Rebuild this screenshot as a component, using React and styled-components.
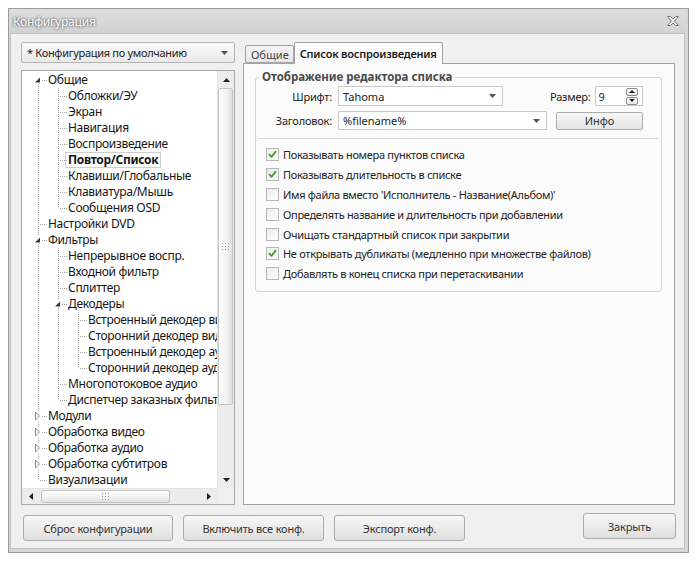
import React from 'react';
import styled, { createGlobalStyle } from 'styled-components';

const Global = createGlobalStyle`
  html, body { margin: 0; padding: 0; background: #ffffff; }
  body { font-family: "Noto Sans", "DejaVu Sans", sans-serif; color: #1a1a1a; }
  * { box-sizing: border-box; }
`;

const TREE = [
  { label: 'Общие', open: true, children: [
    { label: 'Обложки/ЭУ' }, { label: 'Экран' }, { label: 'Навигация' }, { label: 'Воспроизведение' },
    { label: 'Повтор/Список', selected: true }, { label: 'Клавиши/Глобальные' },
    { label: 'Клавиатура/Мышь' }, { label: 'Сообщения OSD' },
  ] },
  { label: 'Настройки DVD' },
  { label: 'Фильтры', open: true, children: [
    { label: 'Непрерывное воспр.' }, { label: 'Входной фильтр' }, { label: 'Сплиттер' },
    { label: 'Декодеры', open: true, children: [
      { label: 'Встроенный декодер видео' }, { label: 'Сторонний декодер видео' },
      { label: 'Встроенный декодер аудио' }, { label: 'Сторонний декодер аудио' },
    ] },
    { label: 'Многопотоковое аудио' }, { label: 'Диспетчер заказных фильтров' },
  ] },
  { label: 'Модули', children: [{ label: '-' }] },
  { label: 'Обработка видео', children: [{ label: '-' }] },
  { label: 'Обработка аудио', children: [{ label: '-' }] },
  { label: 'Обработка субтитров', children: [{ label: '-' }] },
  { label: 'Визуализации' },
];

function flatten(nodes, level = 0, guides = [], out = []) {
  nodes.forEach((node, i) => {
    const hasNext = i < nodes.length - 1;
    out.push({ node, level, guides, hasNext, firstRoot: level === 0 && i === 0 });
    if (node.open && node.children) flatten(node.children, level + 1, guides.concat(hasNext), out);
  });
  return out;
}

const CHECKS = [
  { text: 'Показывать номера пунктов списка', on: true },
  { text: 'Показывать длительность в списке', on: true },
  { text: "Имя файла вместо 'Исполнитель - Название(Альбом)'", on: false },
  { text: 'Определять название и длительность при добавлении', on: false },
  { text: 'Очищать стандартный список при закрытии', on: false },
  { text: 'Не открывать дубликаты (медленно при множестве файлов)', on: true },
  { text: 'Добавлять в конец списка при перетаскивании', on: false },
];

/* ---------- window chrome ---------- */
const Page = styled.div`
  width: 698px;
  height: 561px;
  padding: 8px 0 0 8px;
  background: #ffffff;
`;

const Window = styled.div`
  width: 681px;
  height: 545px;
  border: 1px solid #9c9c9c;
  background: #d6d6d6;
  display: flex;
  flex-direction: column;
  padding: 0 3px 3px 1px;
`;

const TitleBar = styled.div`
  height: 24px;
  flex: 0 0 24px;
  display: flex;
  align-items: center;
  justify-content: space-between;
  padding: 0 5px 0 3px;
  background: linear-gradient(to bottom, #dedede, #d2d2d2);
`;

const TitleText = styled.span`
  font-size: 12px;
  color: #ffffff;
  letter-spacing: -0.2px;
  text-shadow: 0 0 3px #5e5e5e, 0 0 2px #6e6e6e;
`;

const CloseGlyph = styled.svg`
  display: block;
  width: 14px;
  height: 12px;
`;

const CloseIcon = () => (
  <CloseGlyph viewBox="0 0 14 12">
    <path
      d="M1.5 1.5 H4.5 L7 4 L9.5 1.5 H12.5 L8.5 6 L12.5 10.5 H9.5 L7 8 L4.5 10.5 H1.5 L5.5 6 Z"
      fill="#f4f4f4"
      stroke="#7a7a7a"
      strokeWidth="1"
      strokeLinejoin="round"
    />
  </CloseGlyph>
);

const Client = styled.div`
  flex: 1;
  display: flex;
  flex-direction: column;
  background: #f0f0f0;
  border: 1px solid #c2c2c2;
  padding: 8px 8px 7px 10px;
`;

const MainRow = styled.div`
  display: flex;
  gap: 8px;
  height: 463px;
`;

/* ---------- left column ---------- */
const LeftColumn = styled.div`
  width: 214px;
  display: flex;
  flex-direction: column;
  gap: 7px;
`;

const ConfigSelect = styled.div`
  height: 21px;
  flex: 0 0 21px;
  border: 1px solid #b4b4b4;
  border-radius: 2px;
  background: linear-gradient(to bottom, #fafafa, #e9e9e9);
  display: flex;
  align-items: center;
  justify-content: space-between;
  padding: 0 6px 0 5px;
  font-size: 11px;
  letter-spacing: -0.3px;
  color: #222;
`;

const ArrowSvg = styled.svg`
  display: block;
  flex: 0 0 auto;
`;

const Tri = ({ dir = 'down', color = '#555', w = 7, h = 4 }) => {
  const pts = {
    down: `0,0 ${w},0 ${w / 2},${h}`,
    up: `0,${h} ${w},${h} ${w / 2},0`,
    left: `${w},0 ${w},${h} 0,${h / 2}`,
    right: `0,0 0,${h} ${w},${h / 2}`,
  }[dir];
  return (
    <ArrowSvg width={w} height={h} viewBox={`0 0 ${w} ${h}`}>
      <polygon points={pts} fill={color} />
    </ArrowSvg>
  );
};

const TreeFrame = styled.div`
  flex: 1;
  border: 1px solid #a9a9a9;
  background: #ffffff;
  display: grid;
  grid-template-columns: 195px 17px;
  grid-template-rows: 417px 16px;
`;

const TreeList = styled.div`
  overflow: hidden;
  padding: 1px 0 0 6px;
  background: #ffffff;
`;

const TreeRow = styled.div`
  display: flex;
  align-items: center;
  height: 16px;
  white-space: nowrap;
`;

const Cell = styled.span`
  position: relative;
  flex: 0 0 20px;
  height: 16px;
  &::before {
    content: '';
    display: ${(p) => (p.$up || p.$down ? 'block' : 'none')};
    position: absolute;
    left: 10px;
    width: 1px;
    top: ${(p) => (p.$up ? '0' : '8px')};
    bottom: ${(p) => (p.$down ? '0' : '8px')};
    background: repeating-linear-gradient(to bottom, #a3a3a3 0 1px, transparent 1px 2px);
  }
  &::after {
    content: '';
    display: ${(p) => (p.$elbow ? 'block' : 'none')};
    position: absolute;
    left: 12px;
    top: 8px;
    width: 7px;
    height: 1px;
    background: repeating-linear-gradient(to right, #a3a3a3 0 1px, transparent 1px 2px);
  }
`;

const Expander = styled.svg`
  position: absolute;
  left: 6px;
  top: ${(p) => (p.$open ? '4px' : '3px')};
  z-index: 1;
  display: block;
`;

const ExpanderIcon = ({ open }) =>
  open ? (
    <Expander $open width="8" height="8" viewBox="0 0 8 8">
      <rect x="0" y="0" width="8" height="8" fill="#ffffff" />
      <polygon points="6,1.5 6,6.5 1,6.5" fill="#3a3a3a" />
    </Expander>
  ) : (
    <Expander width="8" height="10" viewBox="0 0 8 10">
      <rect x="0" y="0" width="8" height="10" fill="#ffffff" />
      <polygon points="1.5,1 5.5,5 1.5,9" fill="#ffffff" stroke="#8c8c8c" strokeWidth="1" />
    </Expander>
  );

const NodeLabel = styled.span`
  font-size: 12px;
  letter-spacing: -0.3px;
  line-height: 14px;
  height: 16px;
  padding: 0 2px;
  margin-left: -3px;
  border: 1px solid ${(p) => (p.$selected ? '#cfcfcf' : 'transparent')};
  font-weight: ${(p) => (p.$selected ? 700 : 400)};
  color: #151515;
`;

const VScroll = styled.div`
  display: flex;
  flex-direction: column;
  background: #ececec;
  border-left: 1px solid #e4e4e4;
`;

const HScroll = styled.div`
  display: flex;
  align-items: stretch;
  background: #ececec;
  border-top: 1px solid #e4e4e4;
`;

const Corner = styled.div`
  background: #f0f0f0;
`;

const ScrollButton = styled.div`
  flex: 0 0 17px;
  display: flex;
  align-items: center;
  justify-content: center;
`;

const Track = styled.div`
  flex: 1;
  display: flex;
  flex-direction: ${(p) => (p.$vertical ? 'column' : 'row')};
`;

const Thumb = styled.div`
  ${(p) =>
    p.$vertical
      ? `height: 317px; margin: 0 1px 0 0; background: linear-gradient(to right, #fdfdfd, #f3f3f3 55%, #e0e0e0);`
      : `width: 129px; margin: 1px 0 1px 2px; background: linear-gradient(to bottom, #fdfdfd, #f1f1f1 55%, #e2e2e2);`}
  border: 1px solid #c4c4c4;
  border-radius: 2px;
  display: flex;
  align-items: center;
  justify-content: center;
`;

const Grip = () => (
  <svg width="7" height="7" viewBox="0 0 7 7">
    {[0, 3, 6].map((y) =>
      [0, 3, 6].map((x) => <rect key={`${x}-${y}`} x={x} y={y} width="1" height="1" fill="#9a9a9a" />)
    )}
  </svg>
);

/* ---------- right side ---------- */
const TabArea = styled.div`
  width: 432px;
  display: flex;
  flex-direction: column;
`;

const TabStrip = styled.div`
  display: flex;
  align-items: flex-end;
  height: 21px;
  flex: 0 0 21px;
  padding-left: 2px;
  position: relative;
  z-index: 1;
`;

const Tab = styled.div`
  height: ${(p) => (p.$active ? '22px' : '18px')};
  margin-bottom: ${(p) => (p.$active ? '-1px' : '0')};
  padding: 0 ${(p) => (p.$active ? '5px' : '4px')} 0 5px;
  display: flex;
  align-items: center;
  border: 1px solid #a3a3a3;
  border-bottom: ${(p) => (p.$active ? 'none' : '1px solid #a3a3a3')};
  border-radius: 2px 2px 0 0;
  background: ${(p) => (p.$active ? '#fbfbfb' : 'linear-gradient(to bottom, #f4f4f4, #e6e6e6)')};
  font-size: 11px;
  letter-spacing: ${(p) => (p.$active ? '-0.2px' : '0')};
  font-weight: ${(p) => (p.$active ? 600 : 400)};
  color: ${(p) => (p.$active ? '#1a1a1a' : '#444')};
`;

const TabPanel = styled.div`
  flex: 1;
  border: 1px solid #a3a3a3;
  background: #fbfbfb;
  padding: 5px 12px 0 11px;
`;

const Group = styled.fieldset`
  margin: 0;
  padding: 1px 0 7px 0;
  border: 1px solid #d3d3d3;
  border-radius: 3px;
  min-width: 0;
`;

const Legend = styled.legend`
  margin-left: 3px;
  padding: 0 3px;
  font-size: 11.5px;
  line-height: 16px;
  font-weight: 700;
  color: #4a4a4a;
`;

const FormRow = styled.div`
  display: flex;
  align-items: center;
  height: ${(p) => p.$h}px;
  margin-bottom: ${(p) => p.$mb || 0}px;
`;

const FieldLabel = styled.span`
  width: 76px;
  text-align: right;
  margin-right: 6px;
  font-size: 11px;
  letter-spacing: -0.2px;
  color: #222;
`;

const SideLabel = styled.span`
  margin-left: ${(p) => p.$ml}px;
  margin-right: 4px;
  font-size: 11px;
  letter-spacing: -0.2px;
  color: #222;
`;

const Combo = styled.div`
  width: ${(p) => p.$w}px;
  height: 100%;
  border: 1px solid #c9c9c9;
  background: #ffffff;
  display: flex;
  align-items: center;
  justify-content: space-between;
  padding: 0 6px 0 4px;
  font-size: 11px;
  color: #222;
`;

const Spin = styled.div`
  width: 48px;
  height: 100%;
  border: 1px solid #c9c9c9;
  background: #ffffff;
  display: flex;
  align-items: center;
  justify-content: space-between;
  padding: 0 4px 0 3px;
  font-size: 11px;
  color: #222;
`;

const SpinButtons = styled.div`
  display: flex;
  flex-direction: column;
  gap: 1px;
`;

const SpinButton = styled.div`
  width: 12px;
  height: 8px;
  border: 1px solid #8a8a8a;
  border-radius: 2px;
  background: linear-gradient(to bottom, #ffffff, #e4e4e4);
  display: flex;
  align-items: center;
  justify-content: center;
`;

const SmallButton = styled.div`
  margin-left: 9px;
  width: 87px;
  height: 18px;
  border: 1px solid #adadad;
  border-radius: 2px;
  background: linear-gradient(to bottom, #f7f7f7, #e4e4e4);
  display: flex;
  align-items: center;
  justify-content: center;
  font-size: 11px;
  color: #333;
`;

const Separator = styled.div`
  height: 1px;
  margin: 8px 3px 6px 2px;
  background: #d6d6d6;
`;

const CheckRow = styled.div`
  display: flex;
  align-items: center;
  height: 19.8px;
  padding-left: 10px;
  gap: 4px;
  white-space: nowrap;
`;

const Box = styled.span`
  width: 13px;
  height: 13px;
  flex: 0 0 13px;
  border: 1px solid #b6b6b6;
  background: linear-gradient(135deg, #ececec, #ffffff);
  display: flex;
  align-items: center;
  justify-content: center;
`;

const CheckText = styled.span`
  font-size: 11px;
  letter-spacing: -0.3px;
  color: #222;
`;

const Check = () => (
  <svg width="9" height="9" viewBox="0 0 9 9">
    <path d="M1.5 4.6 L3.6 6.8 L7.6 1.6" fill="none" stroke="#3f9a2c" strokeWidth="1.8" strokeLinecap="round" strokeLinejoin="round" />
  </svg>
);

/* ---------- bottom buttons ---------- */
const ButtonRow = styled.div`
  display: flex;
  align-items: flex-end;
  height: 36px;
  padding: 0 0 0 2px;
  gap: 10px;
`;

const DialogButton = styled.div`
  width: ${(p) => p.$w}px;
  height: 26px;
  margin-left: ${(p) => (p.$right ? 'auto' : '0')};
  margin-bottom: ${(p) => (p.$right ? '2px' : '0')};
  border: 1px solid #acacac;
  border-radius: 3px;
  background: linear-gradient(to bottom, #f7f7f7, #ececec 50%, #dedede);
  display: flex;
  align-items: center;
  justify-content: center;
  font-size: 11px;
  letter-spacing: -0.2px;
  color: #333;
`;

export default function App() {
  const rows = flatten(TREE);
  return (
    <>
      <Global />
      <Page>
        <Window>
          <TitleBar>
            <TitleText>Конфигурация</TitleText>
            <CloseIcon />
          </TitleBar>
          <Client>
            <MainRow>
              <LeftColumn>
                <ConfigSelect>
                  <span>* Конфигурация по умолчанию</span>
                  <Tri dir="down" color="#555" />
                </ConfigSelect>
                <TreeFrame>
                  <TreeList>
                    {rows.map((r, idx) => (
                      <TreeRow key={idx}>
                        {r.guides.map((g, gi) => (
                          <Cell key={gi} $up={g} $down={g} />
                        ))}
                        <Cell $up={!r.firstRoot} $down={r.hasNext} $elbow>
                          {r.node.children && <ExpanderIcon open={r.node.open} />}
                        </Cell>
                        <NodeLabel $selected={r.node.selected}>{r.node.label}</NodeLabel>
                      </TreeRow>
                    ))}
                  </TreeList>
                  <VScroll>
                    <ScrollButton><Tri dir="up" color="#222" /></ScrollButton>
                    <Track $vertical>
                      <Thumb $vertical><Grip /></Thumb>
                    </Track>
                    <ScrollButton><Tri dir="down" color="#222" /></ScrollButton>
                  </VScroll>
                  <HScroll>
                    <ScrollButton><Tri dir="left" color="#222" w={4} h={7} /></ScrollButton>
                    <Track>
                      <Thumb><Grip /></Thumb>
                    </Track>
                    <ScrollButton><Tri dir="right" color="#222" w={4} h={7} /></ScrollButton>
                  </HScroll>
                  <Corner />
                </TreeFrame>
              </LeftColumn>
              <TabArea>
                <TabStrip>
                  <Tab>Общие</Tab>
                  <Tab $active>Список воспроизведения</Tab>
                </TabStrip>
                <TabPanel>
                  <Group>
                    <Legend>Отображение редактора списка</Legend>
                    <FormRow $h={20} $mb={5}>
                      <FieldLabel>Шрифт:</FieldLabel>
                      <Combo $w={165}>
                        <span>Tahoma</span>
                        <Tri dir="down" color="#555" />
                      </Combo>
                      <SideLabel $ml={47}>Размер:</SideLabel>
                      <Spin>
                        <span>9</span>
                        <SpinButtons>
                          <SpinButton><Tri dir="up" color="#222" w={6} h={3} /></SpinButton>
                          <SpinButton><Tri dir="down" color="#222" w={6} h={3} /></SpinButton>
                        </SpinButtons>
                      </Spin>
                    </FormRow>
                    <FormRow $h={19}>
                      <FieldLabel>Заголовок:</FieldLabel>
                      <Combo $w={209}>
                        <span>%filename%</span>
                        <Tri dir="down" color="#555" />
                      </Combo>
                      <SmallButton>Инфо</SmallButton>
                    </FormRow>
                    <Separator />
                    {CHECKS.map((c) => (
                      <CheckRow key={c.text}>
                        <Box>{c.on && <Check />}</Box>
                        <CheckText>{c.text}</CheckText>
                      </CheckRow>
                    ))}
                  </Group>
                </TabPanel>
              </TabArea>
            </MainRow>
            <ButtonRow>
              <DialogButton $w={150}>Сброс конфигурации</DialogButton>
              <DialogButton $w={141}>Включить все конф.</DialogButton>
              <DialogButton $w={131}>Экспорт конф.</DialogButton>
              <DialogButton $w={93} $right>Закрыть</DialogButton>
            </ButtonRow>
          </Client>
        </Window>
      </Page>
    </>
  );
}
